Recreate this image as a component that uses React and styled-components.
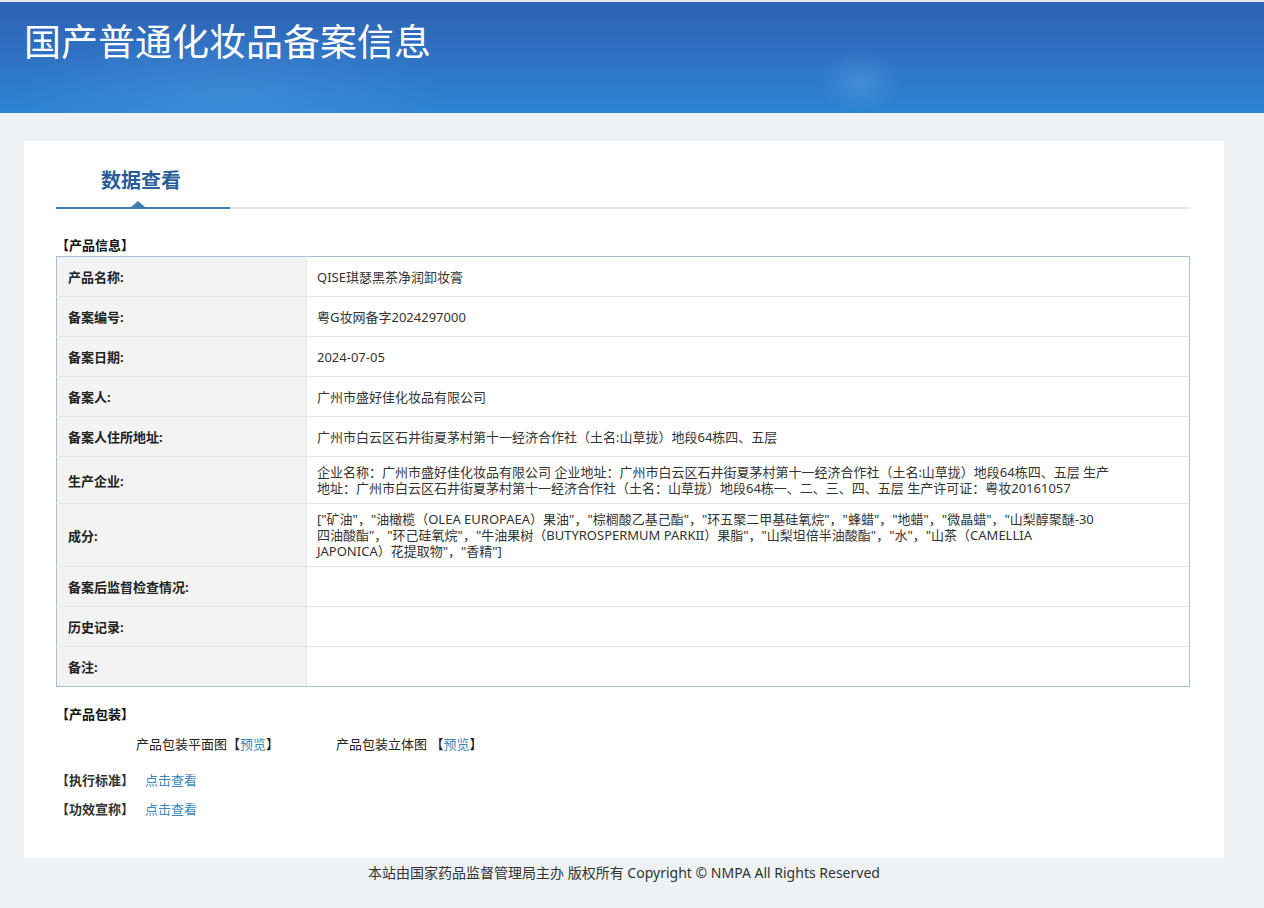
import React from 'react'
import styled, {createGlobalStyle} from 'styled-components'

const GlobalStyle = createGlobalStyle`
    html, body {
        margin: 0;
        padding: 0;
        background: #eef2f5;
        font-family: "Noto Sans", "Noto Sans CJK SC", sans-serif;
        color: #333;
    }
`

const Banner = styled.div`
    height: 113px;
    border-top: 2px solid #e4eaf1;
    background:
        radial-gradient(ellipse 220px 70px at 230px 95px, rgba(90, 160, 230, 0.35), transparent),
        radial-gradient(ellipse 40px 30px at 860px 80px, rgba(110, 175, 235, 0.35), transparent),
        linear-gradient(180deg, #2e63b3 0%, #2f70c2 45%, #2c84d2 100%);
    padding: 18px 0 0 24px;
    box-sizing: border-box;
`
const Title = styled.h1`
    margin: 0;
    font-size: 37px;
    font-weight: normal;
    line-height: 44px;
    color: #fff;
`
const Card = styled.div`
    margin: 28px 40px 0 24px;
    background: #fff;
    padding: 0 34px 40px 32px;
    height: 717px;
    box-sizing: border-box;
`
const TabBar = styled.div`
    display: flex;
    border-bottom: 2px solid #e6e8ea;
`
const Tab = styled.div`
    position: relative;
    width: 174px;
    height: 68px;
    padding: 26px 0 0 45px;
    box-sizing: border-box;
    font-size: 20px;
    font-weight: bold;
    line-height: 28px;
    color: #2b5e99;
    margin-bottom: -2px;
    border-bottom: 2px solid #3d7eb1;

    &::after {
        content: '';
        position: absolute;
        left: 75px;
        bottom: 0;
        border-left: 7px solid transparent;
        border-right: 7px solid transparent;
        border-bottom: 6px solid #3d7eb1;
    }
`
const SectionTitle = styled.div`
    font-size: 13px;
    font-weight: bold;
    line-height: 20px;
    color: #111;
    margin-top: ${p => p.$top || 0}px;
`
const Table = styled.table`
    width: 100%;
    border-collapse: collapse;
    border: 1px solid #a9bed2;
    margin-top: 1px;
    font-size: 13px;
`
const Row = styled.tr`
    border-top: 1px solid #e3e5e8;
    &:first-child {
        border-top: none;
    }
`
const Label = styled.td`
    width: 250px;
    height: 40px;
    box-sizing: border-box;
    padding: 0 11px;
    background: #f3f3f3;
    font-weight: bold;
    color: #222;
    vertical-align: middle;
    border-right: 1px solid #e6e6e6;
`
const Value = styled.td`
    padding: 7px 10px 7px 10px;
    line-height: 16px;
    color: #333;
    vertical-align: middle;
    white-space: nowrap;
`
const PackRow = styled.div`
    display: flex;
    gap: 57px;
    padding-left: 80px;
    margin-top: 10px;
    font-size: 13px;
    line-height: 20px;
    color: #222;
`
const Link = styled.a`
    color: #3d85b8;
    text-decoration: none;
    cursor: pointer;
`
const Line = styled.div`
    display: flex;
    align-items: center;
    gap: 11px;
    margin-top: ${p => p.$top}px;
    font-size: 13px;
    line-height: 20px;
`
const Footer = styled.div`
    text-align: center;
    font-size: 14px;
    line-height: 30px;
    color: #333;
    padding: 0 0 20px 0;
    margin-left: -16px;
`

// each value is a list of display lines
const rows = [
    ['产品名称:', ['QISE琪瑟黑茶净润卸妆膏']],
    ['备案编号:', ['粤G妆网备字2024297000']],
    ['备案日期:', ['2024-07-05']],
    ['备案人:', ['广州市盛好佳化妆品有限公司']],
    ['备案人住所地址:', ['广州市白云区石井街夏茅村第十一经济合作社（土名:山草拢）地段64栋四、五层']],
    ['生产企业:', [
        '企业名称：广州市盛好佳化妆品有限公司 企业地址：广州市白云区石井街夏茅村第十一经济合作社（土名:山草拢）地段64栋四、五层 生产',
        '地址：广州市白云区石井街夏茅村第十一经济合作社（土名：山草拢）地段64栋一、二、三、四、五层 生产许可证：粤妆20161057',
    ]],
    ['成分:', [
        '["矿油"，"油橄榄（OLEA EUROPAEA）果油"，"棕榈酸乙基己酯"，"环五聚二甲基硅氧烷"，"蜂蜡"，"地蜡"，"微晶蜡"，"山梨醇聚醚-30',
        '四油酸酯"，"环己硅氧烷"，"牛油果树（BUTYROSPERMUM PARKII）果脂"，"山梨坦倍半油酸酯"，"水"，"山茶（CAMELLIA',
        'JAPONICA）花提取物"，"香精"]',
    ]],
    ['备案后监督检查情况:', []],
    ['历史记录:', []],
    ['备注:', []],
]

const App = () => {
    return (
        <>
            <GlobalStyle />
            <Banner>
                <Title>国产普通化妆品备案信息</Title>
            </Banner>
            <Card>
                <TabBar>
                    <Tab>数据查看</Tab>
                </TabBar>
                <SectionTitle $top={26}>【产品信息】</SectionTitle>
                <Table>
                    <tbody>
                        {rows.map(([label, lines]) => (
                            <Row key={label}>
                                <Label>{label}</Label>
                                <Value>
                                    {lines.map((text, i) => (
                                        <React.Fragment key={i}>
                                            {i > 0 && <br />}
                                            {text}
                                        </React.Fragment>
                                    ))}
                                </Value>
                            </Row>
                        ))}
                    </tbody>
                </Table>
                <SectionTitle $top={17}>【产品包装】</SectionTitle>
                <PackRow>
                    <span>产品包装平面图【<Link>预览</Link>】</span>
                    <span>产品包装立体图 【<Link>预览</Link>】</span>
                </PackRow>
                <Line $top={16}>
                    <b>【执行标准】</b>
                    <Link>点击查看</Link>
                </Line>
                <Line $top={9}>
                    <b>【功效宣称】</b>
                    <Link>点击查看</Link>
                </Line>
            </Card>
            <Footer>本站由国家药品监督管理局主办 版权所有 Copyright © NMPA All Rights Reserved</Footer>
        </>
    )
}

export default App
